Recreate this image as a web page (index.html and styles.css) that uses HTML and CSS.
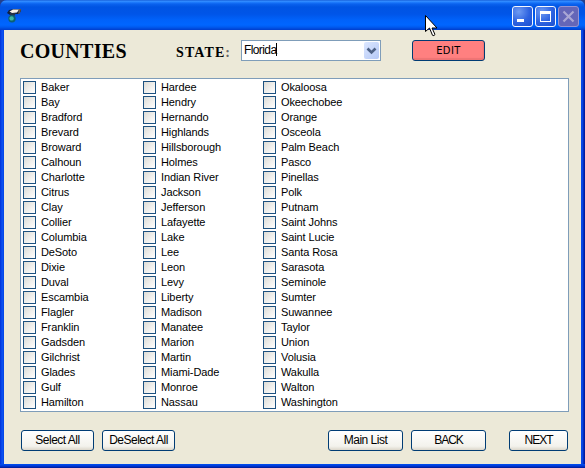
FILE: index.html
```html
<!DOCTYPE html>
<html lang="en">
<head>
<meta charset="utf-8">
<title>Counties</title>
<link rel="stylesheet" href="styles.css">
</head>
<body>
<div class="window">
  <header class="titlebar">
    <svg class="app-icon" width="16" height="16" viewBox="0 0 16 16">
      <path d="M0 5 2 2 7 1h7l0 2-2 3-5 0-4 1z" fill="#102040"/>
      <path d="M2.500 3.500 6 1.500h6l-2 3-5 .5z" fill="#f8f2e8"/>
      <path d="M12 1h2l-1 4-2 1z" fill="#6a5a4c"/>
      <path d="M3 5h6l-2 3.500-4-1z" fill="#28344a"/>
      <circle cx="5" cy="10.800" r="3.700" fill="#0c6074"/>
      <circle cx="4.600" cy="10.400" r="2.200" fill="#3fb8a0"/>
    </svg>
    <div class="controls">
      <span class="control"><svg width="21" height="21"><path d="M5 13h7v3H5z" fill="#fff"/></svg></span>
      <span class="control"><svg width="21" height="21"><path d="M5 5h11v11H5zM6 8v7h9V8z" fill="#fff" fill-rule="evenodd"/></svg></span>
      <span class="control disabled"><svg width="21" height="21"><path d="M5.500 5.500l10 10m0-10l-10 10" stroke="#a9a6d4" stroke-width="2.200"/></svg></span>
    </div>
  </header>
  <main class="client">
    <div class="toolbar">
      <h1 class="heading">COUNTIES</h1>
      <span class="state-label">STATE<span class="colon">:</span></span>
      <div class="combo"><span class="value">Florida</span><span class="caret"></span>
        <span class="arrow"><svg width="15" height="17"><path d="M3.500 6.500l4 4 4-4" fill="none" stroke="#4d6185" stroke-width="2.600"/></svg></span>
      </div>
      <button class="button edit">EDIT</button>
    </div>
    <div class="list" id="list"></div>
    <footer class="actions">
      <button class="button select">Select All</button>
      <button class="button deselect">DeSelect All</button>
      <button class="button main-list">Main List</button>
      <button class="button back">BACK</button>
      <button class="button next">NEXT</button>
    </footer>
  </main>
  <svg class="cursor" width="13" height="22" viewBox="0 0 13 22"><path d="M.5.500v16l4-3.500 3 7.300q1.500 1 2.500-.8l-3-6.500h5z" fill="#fff" stroke="#000"/></svg>
</div>
<script src="counties.js"></script>
</body>
</html>
```
FILE: styles.css
```css
* { box-sizing: border-box; }
body { margin: 0; background: #22408c; overflow: hidden; font: 11px/15px "Liberation Sans", Arial, sans-serif; color: #000; }
.window {
  position: relative; width: 585px; height: 468px; padding: 0 4px 4px;
  border-radius: 7px 7px 0 0; overflow: hidden;
  background: linear-gradient(90deg, #0030d8 0, #0a50f0 2px, #0a50f0 3px, #0040e0 4px, #0040e0 581px, #0a50f0 582px, #0020b0 584px, #001890 585px);
}
.window::after { content: ""; position: absolute; left: 0; right: 0; bottom: 0; height: 4px; background: linear-gradient(#0050f0, #0038d8 50%, #001890); }
.titlebar {
  display: flex; justify-content: space-between; height: 30px; margin: 0 -4px; padding: 6px 6px 0 7px;
  background: linear-gradient(#0a4fd0 0, #3a93ff 1px, #2380ff 2px, #0a62ee 4px, #0054e3 7px, #0055e8 14px, #0062fa 20px, #0066ff 25px, #005bf0 27px, #003dcc 30px);
}
.app-icon { margin-top: 2px; }
.controls { display: flex; gap: 2px; }
.control {
  width: 21px; height: 21px; border: 1px solid #f4f7ff; border-radius: 3px;
  background: radial-gradient(circle at 30% 25%, #6f9bf2, #2d62e0 55%, #1b4fd0);
}
.control svg { display: block; margin: -1px; }
.control.disabled { border-color: #9494d4; background: #6466b8; }
.client { height: 434px; padding: 10px 12px 0 16px; background: #ece9d8; display: flex; flex-direction: column; }
.toolbar { display: flex; height: 38px; flex: none; }
.heading { width: 156px; margin: 0; font: bold 20px/22px "Liberation Serif", "Times New Roman", serif; letter-spacing: .3px; }
.state-label { width: 65px; font: bold 14px/26px "Liberation Serif", "Times New Roman", serif; letter-spacing: 1.1px; }
.colon { color: #666; }
.combo { width: 140px; height: 21px; display: flex; border: 1px solid #7f9db9; background: #fff; padding: 1px 1px 1px 2px; }
.value { font-size: 12px; line-height: 16px; letter-spacing: -.6px; }
.caret { width: 1px; height: 13px; margin-top: 1px; background: #000; }
.arrow { width: 15px; height: 17px; margin-left: auto; border-radius: 2px; background: linear-gradient(135deg, #dce7ff, #b4c8f6); }
.arrow svg { display: block; }
.button {
  height: 21px; padding: 0; border: 1px solid #003c74; border-radius: 3px; color: #000; white-space: nowrap;
  font: 12px/19px "Liberation Sans", Arial, sans-serif; letter-spacing: -.5px; background: linear-gradient(#fff, #f3f2ec 80%, #dcd7cb);
}
.edit { width: 73px; margin-left: 31px; background: #ff8080; box-shadow: inset -1px -2px 1px #ee7474; font: 10px/19px "DejaVu Sans", sans-serif; letter-spacing: .4px; }
.list {
  width: 549px; height: 334px; flex: none; padding: 2px; border: 1px solid #7f9db9; background: #fff;
  display: grid; grid-auto-flow: column; grid-template-rows: repeat(22, 15px); grid-template-columns: repeat(3, 120px);
}
.item { display: flex; gap: 5px; white-space: nowrap; }
.box { width: 13px; height: 13px; border: 1px solid #1c5180; background: linear-gradient(135deg, #dcdcd7, #fff); }
.name { line-height: 13px; letter-spacing: -.1px; }
.actions { display: flex; padding-left: 1px; margin-top: 18px; }
.select, .deselect { width: 73px; }
.deselect { margin-left: 8px; }
.main-list { width: 75px; margin-left: 153px; }
.back { width: 75px; margin-left: 8px; letter-spacing: -1px; }
.next { width: 59px; margin-left: 23px; letter-spacing: -1px; }
.cursor { position: absolute; left: 425px; top: 15px; }
```
FILE: counties.js
```js
const counties = `Baker,Bay,Bradford,Brevard,Broward,Calhoun,Charlotte,Citrus,Clay,Collier,Columbia,DeSoto,Dixie,Duval,Escambia,Flagler,Franklin,Gadsden,Gilchrist,Glades,Gulf,Hamilton,Hardee,Hendry,Hernando,Highlands,Hillsborough,Holmes,Indian River,Jackson,Jefferson,Lafayette,Lake,Lee,Leon,Levy,Liberty,Madison,Manatee,Marion,Martin,Miami-Dade,Monroe,Nassau,Okaloosa,Okeechobee,Orange,Osceola,Palm Beach,Pasco,Pinellas,Polk,Putnam,Saint Johns,Saint Lucie,Santa Rosa,Sarasota,Seminole,Sumter,Suwannee,Taylor,Union,Volusia,Wakulla,Walton,Washington`.split(",");
document.getElementById("list").innerHTML = counties
  .map(name => `<label class="item"><span class="box"></span><span class="name">${name}</span></label>`)
  .join("");
```
